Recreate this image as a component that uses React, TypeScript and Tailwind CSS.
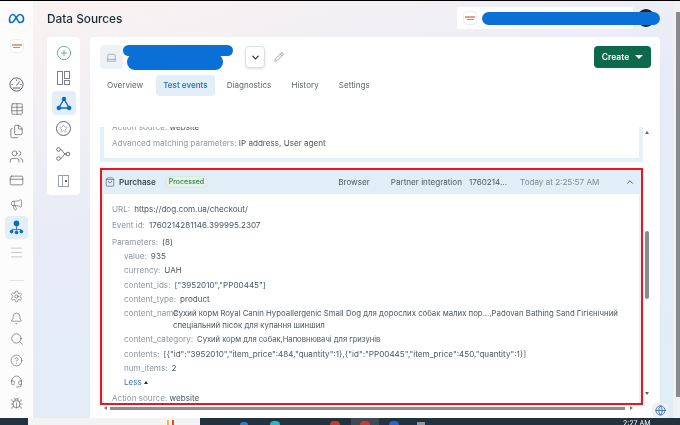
import React from 'react';
import {
  Table, Files, Users, CreditCard, Megaphone, Settings, Bell, Search, CircleHelp, Headset, Bug,
  CirclePlus, Star, ChevronDown, ChevronUp, Pencil, Globe, ShoppingBag, Menu, Laptop,
} from 'lucide-react';

const Meta = () => (
  <svg width="17" height="11" viewBox="0 0 34 22" fill="none">
    <path d="M3 14c0-6 3-11 7-11 6 0 9 16 14 16 3 0 7-2 7-7 0-5-3-9-7-9-5 0-9 9-13 14-2 2-4 2-5 2-2 0-3-2-3-5z" stroke="#0a6fd0" strokeWidth="3.4" />
  </svg>
);

const BrandLogo = ({ className }: { className: string }) => (
  <div className={`flex flex-col items-center justify-center gap-px rounded-sm border border-[#f1eeee] bg-white ${className}`}>
    <div className="h-[1.5px] w-[10px] bg-[#e9a07c]" />
    <div className="h-px w-[7px] bg-[#999]" />
  </div>
);

const GaugeIcon = () => (
  <svg width="15" height="15" viewBox="0 0 15 15" fill="none" stroke="#4f565c" strokeWidth="0.9">
    <circle cx="7.5" cy="7.5" r="6.6" />
    <path d="M7.5 8.5 10.5 4.5M2.5 7.5h1.2M11.3 7.5h1.2M7.5 2.6v1.2M3.5 11h8" />
  </svg>
);

const NodesIcon = () => (
  <svg width="16" height="15" viewBox="0 0 16 15" fill="none">
    <path d="M8 3 2.8 12h10.4Z" stroke="#0a6cc4" strokeWidth="1.4" />
    <circle cx="8" cy="3" r="2.2" fill="#0a6cc4" />
    <circle cx="2.8" cy="12" r="2.2" fill="#0a6cc4" />
    <circle cx="13.2" cy="12" r="2.2" fill="#0a6cc4" />
  </svg>
);

const TeamIcon = () => (
  <svg width="15" height="15" viewBox="0 0 15 15" fill="none">
    <circle cx="7.5" cy="3.4" r="2.8" fill="#0a6cc4" />
    <path d="M7.5 6v4M3 12V9.5h9V12" stroke="#0a6cc4" strokeWidth="0.8" />
    <circle cx="2.6" cy="11.6" r="1.8" fill="#0a6cc4" />
    <circle cx="7.5" cy="12.4" r="1.8" fill="#0a6cc4" />
    <circle cx="12.4" cy="11.6" r="1.8" fill="#0a6cc4" />
  </svg>
);

const BranchIcon = () => (
  <svg width="15" height="14" viewBox="0 0 15 14" fill="none" stroke="#5f666d" strokeWidth="0.9">
    <circle cx="2.5" cy="2.5" r="1.8" />
    <circle cx="2.5" cy="11.5" r="1.8" />
    <circle cx="12" cy="7" r="1.8" />
    <path d="M4.3 2.5c3 0 2 4.5 5.9 4.5M4.3 11.5c3 0 2-4.5 5.9-4.5" />
  </svg>
);

const Row = ({ label, children, w }: { label: string; children: React.ReactNode; w?: string }) => (
  <div className="flex gap-[4px] leading-[11px]">
    <span className={`whitespace-nowrap text-[#8f979e] ${w ?? ''}`}>{label}</span>
    <span className="whitespace-nowrap text-[#4c5761]">{children}</span>
  </div>
);

export default function App() {
  return (
    <div
      className="relative flex h-[425px] w-[680px] flex-col overflow-hidden bg-white text-[8.1px] blur-[0.35px]"
      style={{ fontFamily: 'Inter, "Noto Sans", sans-serif' }}
    >
      <div className="h-px bg-black" />
      <div className="flex h-[417px]">
        {/* left nav */}
        <div className="flex w-[33px] shrink-0 flex-col items-center bg-[#fdfcfc] text-[#4f565c]">
          <div className="mt-[11px] flex h-[12px] items-center"><Meta /></div>
          <BrandLogo className="mt-[15px] h-[14px] w-[14px]" />
          <div className="mt-[24px] flex"><GaugeIcon /></div>
          <Table size={14} strokeWidth={1.1} className="mt-[10px]" />
          <Files size={15} strokeWidth={1.1} className="mt-[8px]" />
          <Users size={15} strokeWidth={1.1} className="mt-[10px]" />
          <CreditCard size={15} strokeWidth={1.1} className="mt-[9px]" />
          <Megaphone size={13} strokeWidth={1.1} className="mt-[10px]" />
          <div className="mt-[5px] flex h-[23px] w-[23px] items-center justify-center rounded-sm bg-[#e2eef8]"><TeamIcon /></div>
          <Menu size={15} strokeWidth={1} className="mt-[6px] text-[#a5a9ad]" />
          <div className="mt-[20px] h-px w-[14px] bg-[#dfe1e3]" />
          <Settings size={13} strokeWidth={1.1} className="mt-[9px]" />
          <Bell size={13} strokeWidth={1.1} className="mt-[9px]" />
          <Search size={14} strokeWidth={1.1} className="mt-[7px]" />
          <CircleHelp size={13} strokeWidth={1.1} className="mt-[8px]" />
          <Headset size={13} strokeWidth={1.1} className="mt-[8px]" />
          <Bug size={13} strokeWidth={1.1} className="mt-[9px]" />
        </div>

        {/* main */}
        <div className="flex min-w-0 flex-1 flex-col bg-[linear-gradient(165deg,#faf3f1_0%,#e6ebf7_45%,#dfeef6_100%)] pl-[14px] pr-[13px]">
          <div className="relative flex h-[36px] shrink-0 items-center">
            <h1 className="mt-[1px] text-[11.8px] font-medium text-[#1c2b33]">Data Sources</h1>
            <div className="ml-auto mb-[2px] mr-[27px] flex h-[22px] w-[176px] items-center bg-white pl-[6px]">
              <BrandLogo className="h-[14px] w-[14px]" />
            </div>
            <div className="absolute right-[5px] top-[8px] h-[18px] w-[18px] rounded-full bg-[#1d2326]" />
            <div className="absolute left-[435px] top-[11px] h-[13px] w-[178px] rounded-full bg-[#0a6fd6]" />
          </div>

          <div className="flex min-h-0 flex-1 gap-[10px]">
            {/* tool rail */}
            <div className="flex h-[158px] w-[33px] shrink-0 flex-col items-center rounded-sm bg-white pt-[4px] text-[#5f666d]">
              <div className="flex h-[24px] items-center"><CirclePlus size={16} strokeWidth={1} className="text-[#2f8f6c]" /></div>
              <div className="flex h-[26px] items-center">
                <div className="flex gap-px">
                  <div className="h-[14px] w-[6px] border border-[#7c828a]" />
                  <div className="flex flex-col gap-px">
                    <div className="h-[8px] w-[6px] border border-[#7c828a]" />
                    <div className="h-[5px] w-[6px] border border-[#7c828a]" />
                  </div>
                </div>
              </div>
              <div className="flex h-[24px] w-[24px] items-center justify-center rounded-sm bg-[#e2eef8]"><NodesIcon /></div>
              <div className="mt-[1px] flex h-[25px] items-center">
                <div className="flex h-[15px] w-[15px] items-center justify-center rounded-full border border-[#5f666d]"><Star size={9} strokeWidth={1.1} /></div>
              </div>
              <div className="flex h-[25px] items-center"><BranchIcon /></div>
              <div className="mt-[2px] flex h-[25px] items-center">
                <div className="flex h-[12px] w-[11px] border border-[#9aa0a5]">
                  <div className="w-[4px] border-r border-[#9aa0a5]" />
                  <div className="ml-[2px] mt-[4px] h-[2px] w-[2px] rounded-full bg-[#333]" />
                </div>
              </div>
            </div>

            {/* card */}
            <div className="relative flex min-w-0 flex-1 flex-col rounded-t-sm bg-white">
              <div className="mt-[-1px] flex h-[33px] shrink-0 items-end pl-[10px] pr-[9px]">
                <div className="flex h-[24px] w-[23px] items-center justify-center rounded-sm bg-[#eef2f7] text-[#5d666e]">
                  <Laptop size={11} strokeWidth={1} />
                </div>
                <div className="ml-[122px] mb-px flex h-[22px] w-[20px] items-center justify-center rounded-sm border border-[#dfe2e5] bg-white shadow-sm">
                  <ChevronDown size={11} strokeWidth={2.5} className="text-[#1c2b33]" />
                </div>
                <Pencil size={10} strokeWidth={1.2} className="mb-[7px] ml-[9px] text-[#4f565c]" />
                <button className="mb-px ml-auto flex h-[22px] w-[57px] items-center justify-center gap-[6px] rounded-sm bg-[#0c6a4a] text-[8.5px] font-semibold text-white">
                  Create
                  <span className="h-0 w-0 border-x-[4px] border-t-[4px] border-x-transparent border-t-white" />
                </button>
              </div>
              {/* redacted name */}
              <div className="absolute left-[33px] top-[8px] h-[11px] w-[110px] rounded-full bg-[#0a6fd6]" />
              <div className="absolute left-[37px] top-[17px] h-[16px] w-[96px] rounded-full bg-[#0a6fd6]" />

              <div className="ml-[4px] mt-[6px] flex h-[21px] items-center text-[8.1px] text-[#5d666e]">
                <span className="px-[13px]">Overview</span>
                <span className="flex h-full items-center rounded-sm bg-[#e2eef8] px-[7px] font-medium text-[#1c6fb5]">Test events</span>
                <span className="ml-[12px]">Diagnostics</span>
                <span className="ml-[20px]">History</span>
                <span className="ml-[20px]">Settings</span>
              </div>

              {/* event list */}
              <div className="mt-[31px] flex h-[291px] min-h-0 shrink-0 pl-[10px] pr-[9px]">
                <div className="flex w-[543px] shrink-0 flex-col overflow-hidden">
                  <div className="-mt-[7px] shrink-0 border-x-[4px] border-b-[4px] border-[#e6f0f9]">
                    <div className="bg-white pb-[9px] pl-[8px] pt-[2px]">
                      <div className="h-[11px] leading-[11px] text-[#8f979e]">Action source: <span className="text-[#4c5761]">website</span></div>
                      <div className="mt-[5px] leading-[11px] text-[#8f979e]">Advanced matching parameters: <span className="text-[#4c5761]">IP address, User agent</span></div>
                    </div>
                  </div>

                  <div className="mt-[6px] h-[237px] shrink-0 overflow-hidden border-2 border-[#f0141e]">
                    <div className="flex h-[24px] items-center whitespace-nowrap bg-[#e2eef7] pl-[3px] pr-[6px]">
                      <ShoppingBag size={10} strokeWidth={1.3} className="text-[#333d46]" />
                      <span className="ml-[4px] font-semibold text-[#3a4650]">Purchase</span>
                      <span className="ml-[9px] rounded-full border border-[#d6ecd9] bg-[#e6f3e6] px-[3px] text-[7px] font-medium leading-[10px] text-[#2f7d56]">Processed</span>
                      <span className="ml-[130px] text-[#4c5761]">Browser</span>
                      <span className="ml-[21px] text-[#4c5761]">Partner integration</span>
                      <span className="ml-[7px] text-[#4c5761]">1760214...</span>
                      <span className="ml-[13px] text-[#808890]">Today at 2:25:57 AM</span>
                      <ChevronUp size={10} strokeWidth={2} className="ml-auto text-[#333d46]" />
                    </div>
                    <div className="mx-[2px] flex h-full flex-col bg-white pl-[8px] pt-[10px] shadow-[-2px_0_0_#e6f0f9,2px_0_0_#e6f0f9]">
                      <Row label="URL:">https://dog.com.ua/checkout/</Row>
                      <div className="mt-[5px]"><Row label="Event id:">1760214281146.399995.2307</Row></div>
                      <div className="mt-[6px]"><Row label="Parameters:">(8)</Row></div>
                      <div className="ml-[12px] mt-[3px] flex flex-col gap-[3.3px]">
                        <Row label="value:">935</Row>
                        <Row label="currency:">UAH</Row>
                        <Row label="content_ids:">["3952010","PP00445"]</Row>
                        <Row label="content_type:">product</Row>
                        <Row label="content_name:" w="w-[45px]">
                          <span className="text-[7.8px]">
                            Сухий корм Royal Canin Hypoallergenic Small Dog для дорослих собак малих пор...,Padovan Bathing Sand Гігієнічний
                            <span className="mt-[1px] block">спеціальний пісок для купання шиншил</span>
                          </span>
                        </Row>
                        <Row label="content_category:"><span className="text-[7.6px]">Сухий корм для собак,Наповнювачі для гризунів</span></Row>
                        <Row label="contents:">{'[{"id":"3952010","item_price":484,"quantity":1},{"id":"PP00445","item_price":450,"quantity":1}]'}</Row>
                        <Row label="num_items:">2</Row>
                        <div className="flex items-center gap-[2px] leading-[11px] text-[#3f75b5]">
                          Less
                          <span className="h-0 w-0 border-x-[2.5px] border-b-[3px] border-x-transparent border-b-[#1c2b33]" />
                        </div>
                      </div>
                      <div className="mt-[5px] leading-[11px] text-[#8f979e]">Action source: <span className="text-[#4c5761]">website</span></div>
                    </div>
                  </div>

                  {/* horizontal scrollbar */}
                  <div className="mt-[1px] flex h-[4px] shrink-0 items-center px-[4px]">
                    <span className="h-0 w-0 border-y-[2px] border-r-[3px] border-y-transparent border-r-[#777]" />
                    <div className="ml-[3px] h-[3px] w-[515px] bg-[#8b8b8b]" />
                    <span className="ml-[5px] h-0 w-0 border-y-[2px] border-l-[3px] border-y-transparent border-l-[#777]" />
                  </div>
                </div>

                {/* vertical scrollbar */}
                <div className="ml-[1px] flex w-[6px] flex-col items-center">
                  <span className="mt-[4px] h-0 w-0 border-x-[2.5px] border-b-[3px] border-x-transparent border-b-[#666]" />
                  <div className="mt-[97px] h-[68px] w-[4.5px] rounded-full bg-[#8b8b8b]" />
                  <span className="mt-[93px] h-0 w-0 border-x-[2.5px] border-t-[3px] border-x-transparent border-t-[#666]" />
                </div>
              </div>
            </div>
          </div>
        </div>

        {/* browser scrollbar */}
        <div className="flex w-[7px] shrink-0 flex-col items-end bg-[#f1f1f1]">
          <div className="mt-[11px] h-[385px] w-[4px] bg-[#8a8a8a]" />
        </div>
      </div>

      {/* taskbar */}
      <div className="flex h-[7px] items-start bg-[#22323e]">
        <div className="ml-[28px] flex h-full w-[172px] bg-[#f3f3f3]">
          <span className="ml-[139px] mt-[2px] h-[5px] w-[2px] bg-[#f2b632]" />
          <span className="ml-[3px] mt-[2px] h-[5px] w-[2px] bg-[#e04a3c]" />
        </div>
        <span className="ml-[40px] mt-[4px] h-[3px] w-[8px] rounded-t-full bg-[#2a80c8]" />
        <span className="ml-[22px] mt-[3px] h-[4px] w-[10px] rounded-t-full bg-[#2ab5c4]" />
        <span className="ml-[50px] mt-[3px] h-[4px] w-[10px] rounded-t-full bg-[#d8352a]" />
        <div className="ml-[11px] flex h-full w-[28px] justify-center bg-[#3c4a55]">
          <span className="mt-[3px] h-[4px] w-[10px] rounded-t-full bg-[#d8352a]" />
        </div>
        <span className="ml-[10px] mt-[3px] h-[4px] w-[10px] rounded-t-full bg-[#2563d8]" />
        <span className="ml-[18px] mt-[4px] h-[3px] w-[8px] bg-[#8f979e]" />
        <span className="ml-[198px] text-[7px] leading-[12px] text-white">2:27 AM</span>
      </div>

      {/* translate widget */}
      <div className="absolute left-[652px] top-[403px] flex h-[15px] w-[16px] items-center justify-center rounded-sm bg-[#eef0f2]">
        <Globe size={11} strokeWidth={2} className="text-[#3e6fb0]" />
      </div>
    </div>
  );
}
